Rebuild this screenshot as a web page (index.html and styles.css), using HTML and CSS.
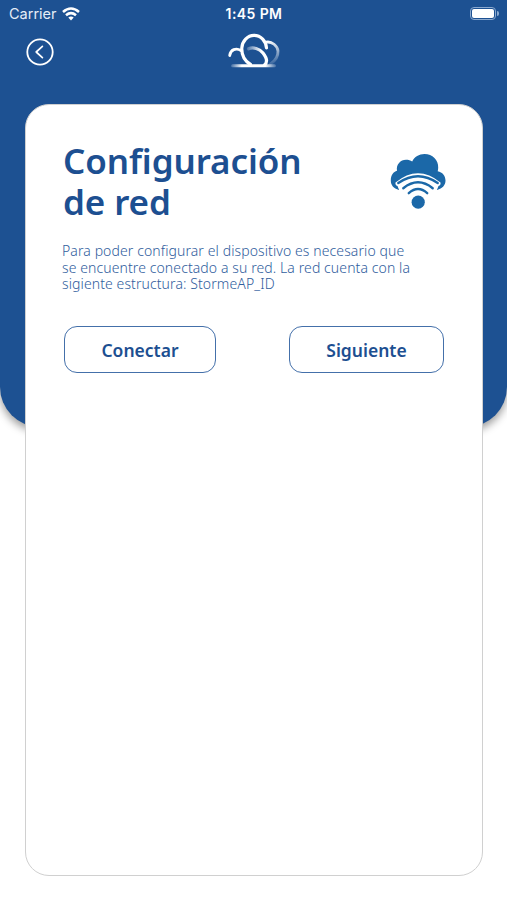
FILE: index.html
```html
<!DOCTYPE html>
<html lang="es">
<head>
  <meta charset="UTF-8">
  <meta name="viewport" content="width=device-width, initial-scale=1.0">
  <title>Configuración de red</title>
  <link rel="stylesheet" href="styles.css">
</head>
<body>
  <div class="screen">
    <div class="backdrop"></div>

    <div class="status-bar">
      <div class="carrier">
        <span>Carrier</span>
        <svg width="18" height="14" viewBox="0 0 18 14" fill="none" stroke="#fff" stroke-width="2.6">
          <path d="M1 4.9Q9 -1.9 17 4.9"/>
          <path d="M4 8.2Q9 4 14 8.2"/>
          <path d="M6.3 10.6Q9 8.3 11.7 10.6L9 13.4Z" fill="#fff" stroke="none"/>
        </svg>
      </div>
      <span class="time">1:45 PM</span>
      <div class="battery"><div class="battery-body"></div><div class="battery-tip"></div></div>
    </div>

    <header class="header">
      <button type="button" class="back-btn" aria-label="Volver">
        <svg width="28" height="28" viewBox="0 0 28 28" fill="none" stroke="#fff" stroke-linecap="round" stroke-linejoin="round">
          <circle cx="14" cy="14" r="12.7" stroke-width="1.8"/>
          <path d="M16.4 8.3L10.2 14L16.4 19.7" stroke-width="1.7"/>
        </svg>
      </button>
      <svg class="logo" width="52" height="36" viewBox="0 0 52 36" fill="none" stroke="#fff" stroke-linecap="round">
        <defs>
          <linearGradient id="base" gradientUnits="userSpaceOnUse" x1="2" y1="0" x2="49" y2="0">
            <stop offset="0" stop-color="#fff" stop-opacity="0.1"/>
            <stop offset="0.25" stop-color="#fff"/>
            <stop offset="0.75" stop-color="#fff"/>
            <stop offset="1" stop-color="#fff" stop-opacity="0.1"/>
          </linearGradient>
          <linearGradient id="side" gradientUnits="userSpaceOnUse" x1="40" y1="8" x2="48" y2="30">
            <stop offset="0" stop-color="#fff"/>
            <stop offset="0.5" stop-color="#fff" stop-opacity="0.6"/>
            <stop offset="1" stop-color="#fff" stop-opacity="0.1"/>
          </linearGradient>
          <linearGradient id="inner" gradientUnits="userSpaceOnUse" x1="19" y1="0" x2="33" y2="0">
            <stop offset="0" stop-color="#fff" stop-opacity="0.2"/>
            <stop offset="1" stop-color="#fff"/>
          </linearGradient>
        </defs>
        <rect x="3" y="31.3" width="45" height="3" rx="1.5" fill="url(#base)" stroke="none"/>
        <path d="M1.7 22.5C2.5 16.5 8 14.5 13 17.5" stroke-width="2.8"/>
        <path d="M22.5 31.5C16.5 28 13.5 22 13.8 15C14.2 8 19.5 2.3 26 2.3C33 2.3 38 8 38.5 15" stroke-width="3.2"/>
        <path d="M38 9.2C44 8 49.5 13 50 18C50.3 23.5 47 28 42.5 31" stroke="url(#side)" stroke-width="2.8"/>
        <path d="M20.5 15.8C25 13.8 31.5 15.5 35 20C38.5 24.5 40 29 36.5 32" stroke="url(#inner)" stroke-width="3.2"/>
      </svg>
    </header>

    <main class="card">
      <div class="card-top">
        <h1 class="title">Configuración<br>de red</h1>
        <svg class="cloud-wifi" width="56" height="56" viewBox="0 0 56 56">
          <path fill="#1b68a8" d="M9 36C3.5 34.5 .8 31 .8 26.5C.8 21 3.5 17.8 7 16.8C6 10.5 10.5 5.8 16 5.8C18.5 5.8 20.5 6.3 22.2 7.5C24.5 2.8 29 0 34.5 0C42.5 0 48.5 6 48.2 13.5C48.2 15 48 16.2 47.7 17.2C52.5 18 55.5 22 55.5 26.5C55.5 31 52.5 34.5 47 36Z"/>
          <!-- gap between the cloud and the waves -->
          <path fill="#fff" d="M5.5 28.5Q28 10 50.5 28.5Q51 31 48.5 32L46.5 37H9.5L7.5 32Q5 31 5.5 28.5Z"/>
          <g fill="none" stroke="#1b68a8" stroke-width="2.4" stroke-linecap="round">
            <path d="M8.3 29Q28 15.5 47.7 29"/>
            <path d="M13.3 34.2Q28 22.5 42.7 34.2"/>
            <path d="M18.8 39.2Q28 31 37.2 39.2"/>
          </g>
          <circle cx="28.2" cy="48.2" r="6.6" fill="#1b68a8"/>
        </svg>
      </div>

      <p class="description">
        Para poder configurar el dispositivo es necesario que<br>
        se encuentre conectado a su red. La red cuenta con la<br>
        sigiente estructura: StormeAP_ID
      </p>

      <div class="actions">
        <button type="button" class="btn btn-connect">Conectar</button>
        <button type="button" class="btn btn-next">Siguiente</button>
      </div>
    </main>
  </div>
</body>
</html>
```
FILE: styles.css
```css
* {
  box-sizing: border-box;
}
body {
  margin: 0;
  background: #fff;
  font-family: "Noto Sans", "Open Sans", sans-serif;
  color: #1d4f91;
}
.screen {
  position: relative;
  height: 900px;
  overflow: hidden;
}
/* blue sheet behind the card */
.backdrop {
  position: absolute;
  top: 0;
  left: 0;
  right: 0;
  height: 427px;
  background: #1d5192;
  border-radius: 0 0 40px 40px;
  box-shadow: 0 4px 9px rgba(0, 0, 0, 0.4);
}
.status-bar,
.header,
.card {
  position: relative;
}
.status-bar {
  display: grid;
  grid-template-columns: 1fr auto 1fr;
  align-items: center;
  height: 27px;
  padding: 0 8px 0 9px;
  color: #fff;
  font-family: Inter, sans-serif;
}
.carrier {
  display: flex;
  align-items: center;
  gap: 5px;
  font-size: 14.5px;
  color: #e5edf7;
}
.time {
  font-size: 14px;
  font-weight: 600;
  letter-spacing: 0.4px;
}
.battery {
  display: flex;
  align-items: center;
  justify-content: flex-end;
  gap: 1px;
}
.battery-body {
  width: 26px;
  height: 13px;
  border: 1px solid #8ba9cf;
  border-radius: 4px;
  padding: 1px;
}
.battery-body::before {
  content: "";
  display: block;
  height: 100%;
  background: #fff;
  border-radius: 2px;
}
.battery-tip {
  width: 2px;
  height: 5px;
  background: #8ba9cf;
  border-radius: 0 2px 2px 0;
}
.header {
  display: flex;
  height: 77px;
  padding: 6px 26px 0;
}
.back-btn {
  width: 28px;
  height: 28px;
  margin-top: 5px;
  padding: 0;
  border: none;
  background: none;
}
.logo {
  margin-left: 174px;
}
.card {
  width: 458px;
  height: 772px;
  margin-left: 25px;
  padding: 38px 37px 0;
  background: #fff;
  border: 1px solid #d0d0d0;
  border-radius: 24px;
}
.card-top {
  display: flex;
  justify-content: space-between;
}
.title {
  margin: -3px 0 0;
  font-size: 35px;
  font-weight: 600;
  line-height: 41px;
  letter-spacing: -0.1px;
  white-space: nowrap;
}
.cloud-wifi {
  margin: 11px -1px 0 0;
}
.description {
  margin: 21px 0 0 -1px;
  font-size: 14px;
  font-weight: 300;
  line-height: 16.5px;
  letter-spacing: 0.1px;
  white-space: nowrap;
  color: #2f5d9d;
}
.actions {
  display: flex;
  justify-content: space-between;
  margin: 33px 1px 0;
}
.btn {
  height: 47px;
  padding: 2px 0 0;
  background: #fff;
  border: 1.5px solid #4470aa;
  border-radius: 13px;
  font-family: inherit;
  font-size: 17.5px;
  font-weight: 600;
  color: #1d4f91;
}
.btn-connect {
  width: 152px;
}
.btn-next {
  width: 155px;
}
```
